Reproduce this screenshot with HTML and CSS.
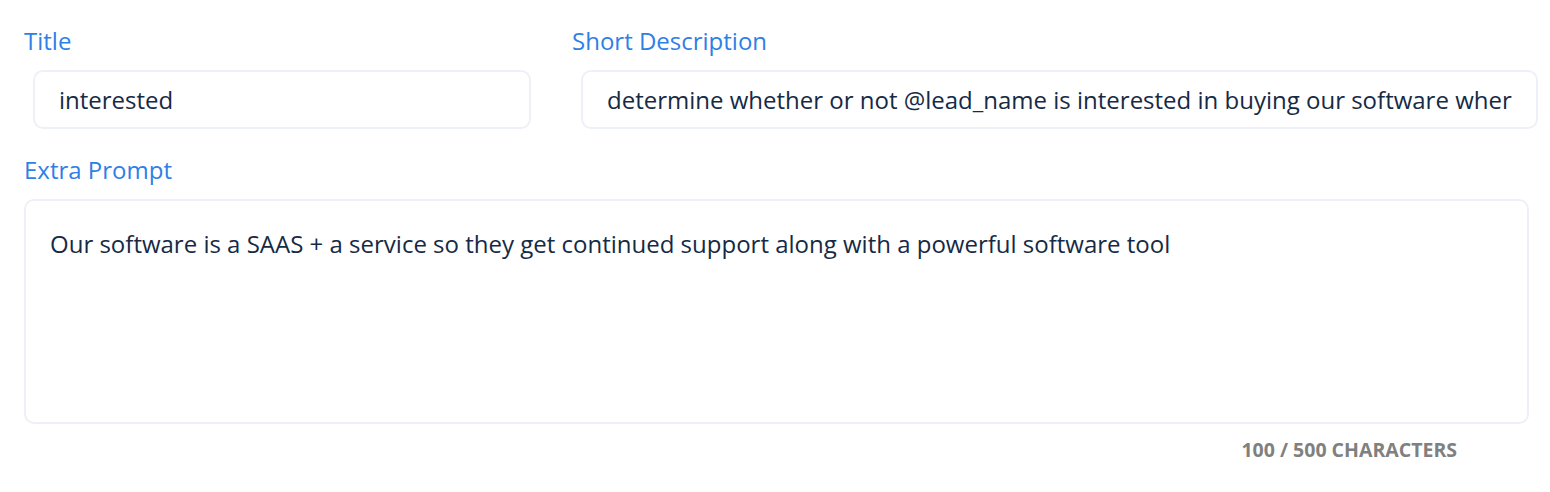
FILE: index.html
```html
<!DOCTYPE html>
<html>
<head>
<meta charset="utf-8">
<link rel="stylesheet" href="styles.css">
</head>
<body>
<div class="form">
  <div class="row">
    <div class="field">
      <div class="label">Title</div>
      <div class="input">interested</div>
    </div>
    <div class="field">
      <div class="label">Short Description</div>
      <div class="input">determine whether or not @lead_name is interested in buying our software wher</div>
    </div>
  </div>
  <div class="field">
    <div class="label">Extra Prompt</div>
    <div class="textarea">Our software is a SAAS + a service so they get continued support along with a powerful software tool</div>
  </div>
  <div class="count">100 / 500 CHARACTERS</div>
</div>
</body>
</html>
```
FILE: styles.css
```css
html, body {
  margin: 0;
  padding: 0;
  background: #ffffff;
}
body {
  font-family: "Open Sans", "Noto Sans", sans-serif;
  color: #162a45;
}
.form {
  width: 1505px;
  padding: 26px 0 0 24px;
  display: flex;
  flex-direction: column;
}
.row {
  display: grid;
  grid-template-columns: 498px 1fr;
  gap: 50px;
}
.field {
  display: flex;
  flex-direction: column;
}
.label {
  font-size: 24px;
  line-height: 30px;
  color: #2f7fe6;
  margin-bottom: 14px;
}
.input {
  margin-left: 9px;
  margin-right: -9px;
  height: 59px;
  box-sizing: border-box;
  border: 2px solid #edf1f7;
  border-radius: 10px;
  padding: 0 24px;
  font-size: 24px;
  line-height: 55px;
  white-space: nowrap;
  overflow: hidden;
}
.row + .field {
  margin-top: 26px;
}
.textarea {
  height: 225px;
  box-sizing: border-box;
  border: 2px solid #edf1f7;
  border-radius: 10px;
  padding: 25px 24px;
  font-size: 24px;
  line-height: 36px;
}
.count {
  align-self: flex-end;
  margin-right: 72px;
  margin-top: 14px;
  font-size: 19.5px;
  font-weight: 700;
  color: #808080;
  line-height: 24px;
}
```
